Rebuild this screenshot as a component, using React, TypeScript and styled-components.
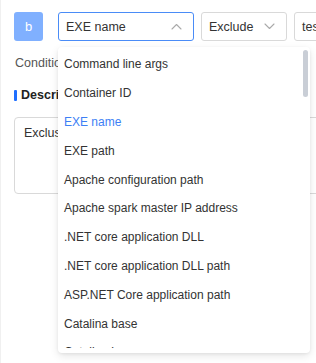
import React from "react";
import styled, { createGlobalStyle } from "styled-components";

const Global = createGlobalStyle`
  html, body { margin: 0; padding: 0; background: #fff; }
  body { font-family: "Liberation Sans", Arial, sans-serif; overflow: hidden; }
  * { box-sizing: border-box; }
`;

const Page = styled.div`
  position: relative;
  width: 316px;
  height: 363px;
  overflow: hidden;
  border-left: 1px solid #f0f0f0;
  padding: 12px 0 0 13px;
`;

const Row = styled.div`
  display: flex;
  align-items: center;
  height: 29px;
  white-space: nowrap;
`;

const Avatar = styled.div`
  width: 29px;
  height: 29px;
  border-radius: 3px;
  background: #80b0ff;
  color: #fff;
  font-size: 13px;
  display: flex;
  align-items: center;
  justify-content: center;
  flex: none;
  margin-right: 15px;
`;

const Select = styled.div<{ $w: number; $active?: boolean }>`
  position: relative;
  width: ${(p) => p.$w}px;
  height: 29px;
  flex: none;
  border: 1px solid ${(p) => (p.$active ? "#4a8cf7" : "#d9d9d9")};
  border-radius: 3px;
  display: flex;
  align-items: center;
  justify-content: space-between;
  padding: 0 11px 0 7px;
  font-size: 12.5px;
  color: #333;
  margin-right: 7px;
  background: #fff;
`;

const Input = styled.div`
  width: 100px;
  height: 29px;
  flex: none;
  border: 1px solid #d9d9d9;
  border-radius: 3px;
  display: flex;
  align-items: center;
  padding: 0 7px;
  font-size: 12.5px;
  color: #333;
`;

const Label = styled.div`
  margin-top: 15px;
  font-size: 12.5px;
  color: #555;
  height: 14px;
  line-height: 14px;
  padding-left: 1px;
`;

const Heading = styled.div`
  margin-top: 18px;
  display: flex;
  align-items: center;
  gap: 4px;
  font-size: 12.5px;
  font-weight: bold;
  color: #222;
  height: 14px;
  &::before {
    content: "";
    width: 3px;
    height: 11px;
    background: #1f6fff;
    border-radius: 1px;
  }
`;

const TextArea = styled.div`
  margin-top: 15px;
  width: 320px;
  height: 77px;
  border: 1px solid #d9d9d9;
  border-radius: 4px;
  padding: 8px 9px;
  font-size: 12.5px;
  color: #333;
`;

const Dropdown = styled.div`
  position: absolute;
  left: 57px;
  top: 47px;
  width: 252px;
  height: 306px;
  background: #fff;
  border-radius: 4px;
  box-shadow: 0 3px 8px rgba(0, 0, 0, 0.1), 0 1px 3px rgba(0, 0, 0, 0.06);
  padding: 3px 0 5px;
  overflow: hidden;
`;

const List = styled.div`
  height: 100%;
  overflow: hidden;
`;

const Item = styled.div<{ $selected?: boolean }>`
  height: 28.8px;
  display: flex;
  align-items: center;
  padding-left: 6px;
  font-size: 12px;
  color: ${(p) => (p.$selected ? "#3d7ff5" : "#333")};
  white-space: nowrap;
`;

const Scrollbar = styled.div`
  position: absolute;
  right: 2px;
  top: 3px;
  width: 5px;
  height: 47px;
  border-radius: 3px;
  background: #c9ced6;
`;

const Chevron = ({ up }: { up?: boolean }) => (
  <svg width="11" height="7" viewBox="0 0 11 7" fill="none">
    <path
      d={up ? "M1 6 L5.5 1.5 L10 6" : "M1 1 L5.5 5.5 L10 1"}
      stroke="#aaa"
      strokeWidth="1.1"
      strokeLinecap="round"
      strokeLinejoin="round"
    />
  </svg>
);

const items = [
  "Command line args",
  "Container ID",
  "EXE name",
  "EXE path",
  "Apache configuration path",
  "Apache spark master IP address",
  ".NET core application DLL",
  ".NET core application DLL path",
  "ASP.NET Core application path",
  "Catalina base",
  "Catalina home",
];

export default function App() {
  return (
    <>
      <Global />
      <Page>
        <Row>
          <Avatar>b</Avatar>
          <Select $w={136} $active>
            <span>EXE name</span>
            <Chevron up />
          </Select>
          <Select $w={86}>
            <span>Exclude</span>
            <Chevron />
          </Select>
          <Input>test</Input>
        </Row>
        <Label>Condition</Label>
        <Heading>Description</Heading>
        <TextArea>Exclusion</TextArea>
        <Dropdown>
          <List>
            {items.map((t) => (
              <Item key={t} $selected={t === "EXE name"}>
                {t}
              </Item>
            ))}
          </List>
          <Scrollbar />
        </Dropdown>
      </Page>
    </>
  );
}
